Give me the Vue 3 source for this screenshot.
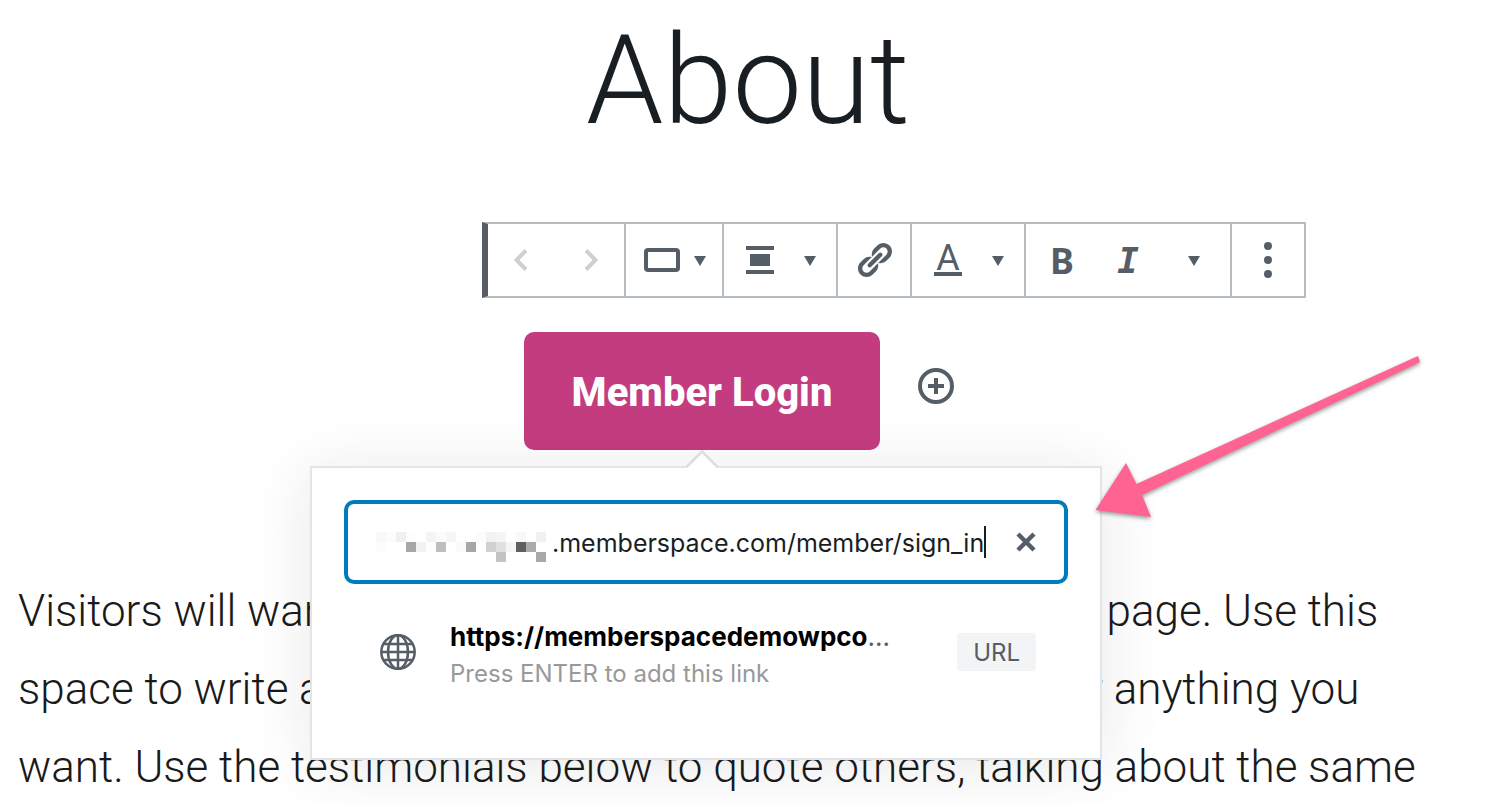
<script setup>
import { ref } from 'vue'

const title = ref('About')
const url = ref('.memberspace.com/member/sign_in')

const lines = [
  'Visitors will want to know who is on the other side of the page. Use this',
  'space to write about yourself, your site, your business, or anything you',
  'want. Use the testimonials below to quote others, talking about the same'
]

// Blurred-out subdomain, one colour per 10px cell
const mosaic = [
  ['#f8f8f8', '#fcfcfc', '#f0f0f0', '#fdfdfd', '', '#f4f4f4', '#fafcfb', '#f6f6f6', '#fefefe', '', '#fafdfc', '#f1f3f2', '#f4f5f5', '#fefefe', '#f8f8f8', '#fefefe', '#f1f1f1'],
  ['#fcfcfc', '', '', '#a6a7a8', '#f2f2f2', '#fefefe', '#bdbebe', '', '#fafafa', '#a6a7a8', '', '#d0d2d2', '#dfe2e1', '#f5f5f5', '#5c6061', '#a9abad', '#fefefe'],
  ['', '', '', '', '', '', '', '', '', '', '', '', '#c3c5c4', '', '', '', '#a9a9a9']
]
</script>

<template>
  <main class="page">
    <h1 class="title">{{ title }}</h1>

    <section class="block">
      <div class="toolbar" role="toolbar" aria-label="Block tools">
        <div class="group movers">
          <button class="tool" disabled aria-label="Move left">
            <svg class="icon" viewBox="0 0 40 40"><path d="M26 10.500L16.500 20l9.500 9.500" fill="none" stroke="currentColor" stroke-width="4" /></svg>
          </button>
          <button class="tool" disabled aria-label="Move right">
            <svg class="icon" viewBox="0 0 40 40"><path d="M14 10.500l9.500 9.500-9.500 9.500" fill="none" stroke="currentColor" stroke-width="4" /></svg>
          </button>
        </div>
        <div class="group">
          <button class="tool switcher" aria-label="Change block type">
            <svg class="icon" viewBox="0 0 40 40"><rect x="4" y="10" width="32" height="20" rx="2" fill="none" stroke="currentColor" stroke-width="4" /></svg>
            <svg class="caret" viewBox="0 0 12 12"><path d="M0 2h12L6 12z" fill="currentColor" /></svg>
          </button>
        </div>
        <div class="group">
          <button class="tool dropdown" aria-label="Change alignment">
            <svg class="icon" viewBox="0 0 40 40"><path d="M6 6h28v4H6zM10 14h20v12H10zM6 30h28v4H6z" fill="currentColor" /></svg>
            <svg class="caret" viewBox="0 0 12 12"><path d="M0 2h12L6 12z" fill="currentColor" /></svg>
          </button>
        </div>
        <div class="group">
          <button class="tool" aria-label="Link">
            <svg class="icon" viewBox="0 0 20 20"><path fill="currentColor" d="M17.74 2.76c1.68 1.69 1.68 4.41 0 6.1l-1.53 1.52c-1.12 1.12-2.7 1.47-4.14 1.09l2.62-2.61.76-.77.76-.76c.84-.84.84-2.2 0-3.04-.84-.85-2.2-.85-3.04 0l-.77.76-3.38 3.38c-.37-1.44-.02-3.02 1.1-4.14l1.52-1.53c1.69-1.68 4.42-1.68 6.1 0zM8.59 13.43l5.34-5.34c.42-.42.42-1.1 0-1.52-.44-.43-1.13-.39-1.53 0l-5.33 5.34c-.42.42-.42 1.1 0 1.52.44.43 1.13.39 1.52 0zm-.76 2.29l4.14-4.15c.38 1.44.03 3.02-1.09 4.14l-1.52 1.53c-1.69 1.68-4.41 1.68-6.1 0-1.68-1.68-1.68-4.42 0-6.1l1.53-1.52c1.12-1.12 2.7-1.47 4.14-1.1l-4.14 4.15c-.85.84-.85 2.2 0 3.05.84.84 2.2.84 3.04 0z" /></svg>
          </button>
        </div>
        <div class="group">
          <button class="tool dropdown" aria-label="Text color">
            <span class="letter letter-color">A</span>
            <svg class="caret" viewBox="0 0 12 12"><path d="M0 2h12L6 12z" fill="currentColor" /></svg>
          </button>
        </div>
        <div class="group">
          <button class="tool" aria-label="Bold"><span class="letter letter-bold">B</span></button>
          <button class="tool narrow" aria-label="Italic"><span class="letter letter-italic">I</span></button>
          <button class="tool" aria-label="More rich text controls">
            <svg class="caret" viewBox="0 0 12 12"><path d="M0 2h12L6 12z" fill="currentColor" /></svg>
          </button>
        </div>
        <div class="group">
          <button class="tool" aria-label="More options">
            <svg class="icon" viewBox="0 0 40 40" fill="currentColor"><circle cx="20" cy="6" r="4" /><circle cx="20" cy="20" r="4" /><circle cx="20" cy="34" r="4" /></svg>
          </button>
        </div>
      </div>

      <div class="buttons">
        <div class="anchor">
          <button class="login">Member Login</button>

          <div class="popover">
            <svg class="tip" viewBox="0 0 34 18"><path d="M1 18L17 2l16 16z" fill="#fff" /><path d="M1.500 17L17 1.500 32.500 17" fill="none" stroke="#dcdee1" stroke-width="2.500" /></svg>

            <div class="field">
              <svg class="mosaic" viewBox="0 0 170 30" shape-rendering="crispEdges" aria-hidden="true">
                <template v-for="(row, y) in mosaic" :key="y">
                  <rect v-for="(color, x) in row" :key="x" :x="x * 10" :y="y * 10" width="10" height="10" :fill="color || 'none'" />
                </template>
              </svg>
              <input v-model="url" class="url" type="text" aria-label="URL" spellcheck="false">
              <span class="cursor"></span>
              <button class="clear" aria-label="Clear">
                <svg viewBox="0 0 20 20"><path d="M2 2l16 16M18 2L2 18" stroke="currentColor" stroke-width="4.500" /></svg>
              </button>
            </div>

            <button class="result">
              <svg class="globe" viewBox="0 0 36 36" fill="none" stroke="currentColor" stroke-width="2.500">
                <circle cx="18" cy="18" r="16.700" />
                <ellipse cx="18" cy="18" rx="10" ry="16.700" />
                <path d="M18 1v34M1 18h34M3.500 10h29M3.500 26h29" />
              </svg>
              <span class="result-text">
                <span class="result-title"><mark>https://memberspacedemowpco</mark>…</span>
                <span class="result-info">Press ENTER to add this link</span>
              </span>
              <span class="badge">URL</span>
            </button>

            <svg class="pointer" viewBox="0 0 340 180" aria-hidden="true">
              <path d="M5.500 160L36 113l10.500 21L328 6l2 6L52 145l9 22z" fill="#ff6392" />
            </svg>
          </div>
        </div>
        <button class="add" aria-label="Add button">
          <svg viewBox="0 0 36 36" fill="none" stroke="currentColor" stroke-width="4"><circle cx="18" cy="18" r="16" /><path d="M18 10v16M10 18h16" /></svg>
        </button>
      </div>
    </section>

    <p class="copy">
      <span v-for="line in lines" :key="line">{{ line }}</span>
    </p>
  </main>
</template>

<style>
body {
  margin: 0;
  background: #fff;
  overflow: hidden;
}
</style>

<style scoped>
.page {
  box-sizing: border-box;
  padding: 8px 34px 0 18px;
  font-family: Roboto, 'Liberation Sans', sans-serif;
  color: #191e23;
}

button {
  margin: 0;
  padding: 0;
  border: 0;
  background: none;
  color: #555d66;
  font-family: inherit;
}

svg {
  display: block;
}

.title {
  margin: 0 0 68px;
  font-size: 124px;
  font-weight: 300;
  line-height: 146px;
  text-align: center;
}

.block {
  margin-left: calc(50% - 266px);
}

.toolbar {
  display: flex;
  width: fit-content;
  border: 2px solid #b5bcc2;
  border-left: 6px solid #555d66;
  border-right: 0;
}

.group {
  display: flex;
  border-right: 2px solid #b5bcc2;
}

.tool {
  display: flex;
  align-items: center;
  justify-content: center;
  width: 72px;
  height: 72px;
}

.tool:disabled {
  color: #cdd0d3;
}

.movers {
  gap: 8px;
}

.movers .tool {
  width: 64px;
}

.tool.narrow {
  width: 60px;
}

.tool.switcher {
  width: 96px;
  gap: 12px;
}

.tool.dropdown {
  width: 112px;
  padding-right: 4px;
  gap: 24px;
}

.icon {
  width: 40px;
  height: 40px;
}

.caret {
  width: 12px;
  height: 12px;
}

.letter {
  font-size: 36px;
  line-height: 40px;
}

.letter-color {
  width: 28px;
  margin: 0 6px;
  border-bottom: 4px solid #555d66;
  line-height: 28px;
}

.letter-bold {
  padding-top: 2px;
  font-family: 'Noto Sans', sans-serif;
  font-weight: 700;
}

.letter-italic {
  padding-top: 2px;
  font-family: 'DejaVu Sans Mono', monospace;
  font-weight: 700;
  font-style: italic;
}

.buttons {
  display: flex;
  gap: 38px;
  padding: 34px 0 0 42px;
}

.anchor {
  position: relative;
}

.login {
  min-width: 356px;
  height: 118px;
  padding: 2px 40px 0;
  border-radius: 10px;
  background: #c43c80;
  color: #fff;
  font-size: 40px;
  font-weight: 800;
}

.add {
  align-self: flex-start;
  width: 36px;
  margin-top: 36px;
}

.popover {
  position: absolute;
  top: calc(100% + 16px);
  left: -214px;
  box-sizing: border-box;
  width: 792px;
  padding: 32px 32px 67px;
  border: 2px solid #e2e4e7;
  background: #fff;
  box-shadow: 0 6px 60px rgba(25, 30, 35, 0.1);
  font-family: Inter, 'Liberation Sans', sans-serif;
}

.tip {
  position: absolute;
  top: -18px;
  left: 373px;
  width: 34px;
  height: 18px;
}

.field {
  display: flex;
  align-items: center;
  box-sizing: border-box;
  width: 724px;
  height: 84px;
  padding: 0 28px;
  border: 4px solid #007cba;
  border-radius: 10px;
}

.mosaic {
  flex: none;
  width: 170px;
  height: 30px;
  margin-top: 10px;
}

.url {
  flex: 1;
  min-width: 0;
  height: 40px;
  margin: 0;
  padding: 2px 0 0 6px;
  border: 0;
  outline: 0;
  background: none;
  color: #191e23;
  font-family: inherit;
  font-size: 25px;
}

.cursor {
  width: 2px;
  height: 32px;
  background: #191e23;
}

.clear {
  margin-left: 30px;
}

.clear svg {
  width: 20px;
  height: 20px;
}

.result {
  display: flex;
  align-items: center;
  width: 724px;
  margin-top: 29px;
  padding: 0 32px 0 36px;
  text-align: left;
}

.globe {
  flex: none;
  width: 36px;
  height: 36px;
}

.result-text {
  flex: 1;
  display: flex;
  flex-direction: column;
  margin-left: 34px;
  padding-top: 4px;
}

.result-title {
  font-size: 26px;
  line-height: 40px;
}

.result-title mark {
  background: none;
  color: #000;
  font-weight: 700;
}

.result-info {
  color: #999;
  font-size: 24px;
  line-height: 34px;
}

.badge {
  padding: 2px 16px 0;
  border-radius: 4px;
  background: #f3f4f5;
  font-size: 24px;
  line-height: 36px;
}

.pointer {
  position: absolute;
  top: -118px;
  left: 778px;
  width: 340px;
  height: 180px;
  filter: drop-shadow(0 2px 2px rgba(0, 0, 0, 0.4));
}

.copy {
  margin: 122px 0 0;
  color: #1a1a1a;
  font-size: 44px;
  font-weight: 300;
  line-height: 78px;
}

.copy span {
  display: block;
  white-space: nowrap;
}
</style>
